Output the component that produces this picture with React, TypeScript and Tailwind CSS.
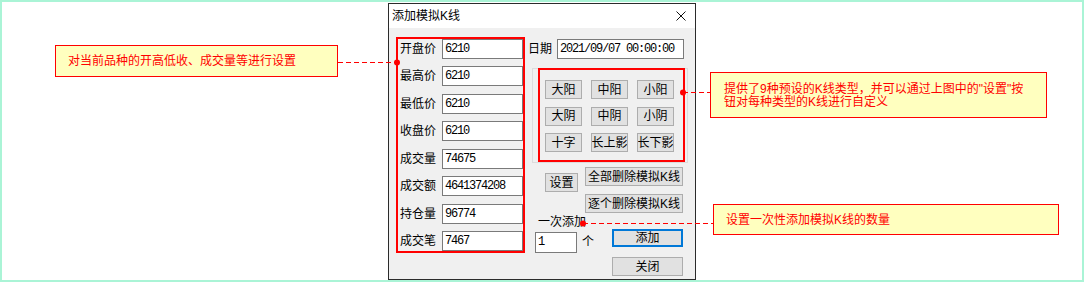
import React from 'react';

const fields = [
  { label: '开盘价', value: '6210' },
  { label: '最高价', value: '6210' },
  { label: '最低价', value: '6210' },
  { label: '收盘价', value: '6210' },
  { label: '成交量', value: '74675' },
  { label: '成交额', value: '4641374208' },
  { label: '持仓量', value: '96774' },
  { label: '成交笔', value: '7467' },
];

const kTypes = ['大阳', '中阳', '小阳', '大阴', '中阴', '小阴', '十字', '长上影', '长下影'];

const btn =
  'h-[19px] bg-[#e1e1e1] border border-[#adadad] flex items-center justify-center text-[12px] leading-none whitespace-nowrap overflow-hidden';
const field =
  "h-[20px] bg-white border border-[#7a7a7a] pl-[2px] leading-[18px] text-[12px] font-['Liberation_Mono',monospace] tracking-[-1.2px]";
const note = 'absolute border border-[#ff0000] bg-[#ffffbf] text-[#ff0000] text-[12px]';

export default function App() {
  return (
    <div className="relative w-[1084px] h-[282px] border-2 border-[#aaf4d6] bg-white overflow-hidden font-['Liberation_Sans','Noto_Sans_CJK_SC',sans-serif] text-[12px] text-black">
      {/* Dialog */}
      <div className="ml-[386px] mt-[1px] w-[308px] h-[277px] border border-[#2b2b2b] flex flex-col">
        <div className="h-[24px] bg-white flex items-center pl-[3px] pr-[9px]">
          <span className="leading-none">添加模拟K线</span>
          <svg className="ml-auto" width="10" height="10" viewBox="0 0 10 10">
            <path d="M0.5 0.5 L9.5 9.5 M9.5 0.5 L0.5 9.5" stroke="#111" strokeWidth="1" />
          </svg>
        </div>

        <div className="flex-1 bg-[#f0f0f0] flex items-start pl-[7px] pt-[9px]">
          {/* Price fields */}
          <div className="w-[129px] h-[216px] border-2 border-[#ff0000] flex flex-col justify-between pl-[2px]">
            {fields.map((f) => (
              <div key={f.label} className="flex items-center h-[20px]">
                <span className="w-[42px] leading-none">{f.label}</span>
                <div className={`${field} w-[81px]`}>{f.value}</div>
              </div>
            ))}
          </div>

          {/* Right column */}
          <div className="ml-[3px] mt-[2px] w-[166px] flex flex-col">
            <div className="flex items-center h-[20px]">
              <span className="leading-none">日期</span>
              <div className={`${field} ml-[5px] w-[127px]`}>2021/09/07 00:00:00</div>
            </div>

            <div className="mt-[9px] ml-[4px] w-[156px] h-[95px] border border-[#dcdcdc]">
              <div className="ml-[5px] -mt-[1px] w-[147px] h-[94px] border-2 border-[#ff0000] pl-[5px] pt-[10px]">
                <div className="grid grid-cols-[37px_37px_37px] gap-x-[9px] gap-y-[7.5px]">
                  {kTypes.map((k) => (
                    <div key={k} className={btn}>
                      {k}
                    </div>
                  ))}
                </div>
              </div>
            </div>

            <div className="flex items-start mt-[4px]">
              <div className={`${btn} ml-[17px] mt-[6px] w-[33px]`}>设置</div>
              <div className="ml-[7px] flex flex-col gap-[8px]">
                <div className={`${btn} w-[98px]`}>全部删除模拟K线</div>
                <div className={`${btn} w-[98px]`}>逐个删除模拟K线</div>
              </div>
            </div>

            <div className="mt-[2px] ml-[10px] h-[14px] leading-[14px]">一次添加</div>

            <div className="flex items-start">
              <div className={`${field} ml-[7px] mt-[3px] w-[42px] h-[21px] leading-[19px]`}>1</div>
              <span className="ml-[5px] mt-[6px] leading-[14px]">个</span>
              <div className="ml-[18px] flex flex-col">
                <div className="h-[18px] w-[71px] bg-[#e1e1e1] border-2 border-[#0078d7] flex items-center justify-center leading-none">
                  添加
                </div>
                <div className={`${btn} mt-[10px] w-[71px]`}>关闭</div>
              </div>
            </div>
          </div>
        </div>
      </div>

      {/* Callouts */}
      <div className={`${note} left-[53px] top-[43px] w-[283px] h-[32px] pl-[12px] flex items-center`}>
        对当前品种的开高低收、成交量等进行设置
      </div>
      <div className={`${note} left-[708px] top-[70px] w-[337px] h-[46px] pl-[13px] pt-[10px] leading-[13px]`}>
        提供了9种预设的K线类型，并可以通过上图中的"设置"按
        <br />
        钮对每种类型的K线进行自定义
      </div>
      <div className={`${note} left-[711px] top-[202px] w-[346px] h-[31px] pl-[12px] flex items-center`}>
        设置一次性添加模拟K线的数量
      </div>

      <svg className="absolute left-0 top-0 pointer-events-none" width="1080" height="278">
        <g stroke="#ff0000" strokeWidth="1" strokeDasharray="5 3">
          <line x1="336" y1="60.5" x2="395" y2="60.5" />
          <line x1="681" y1="90.5" x2="708" y2="90.5" />
          <line x1="581" y1="221.5" x2="711" y2="221.5" />
        </g>
        <g fill="#ff0000">
          <circle cx="395" cy="60.5" r="3" />
          <circle cx="681" cy="90.5" r="3" />
          <circle cx="581" cy="221.5" r="3" />
        </g>
      </svg>
    </div>
  );
}
